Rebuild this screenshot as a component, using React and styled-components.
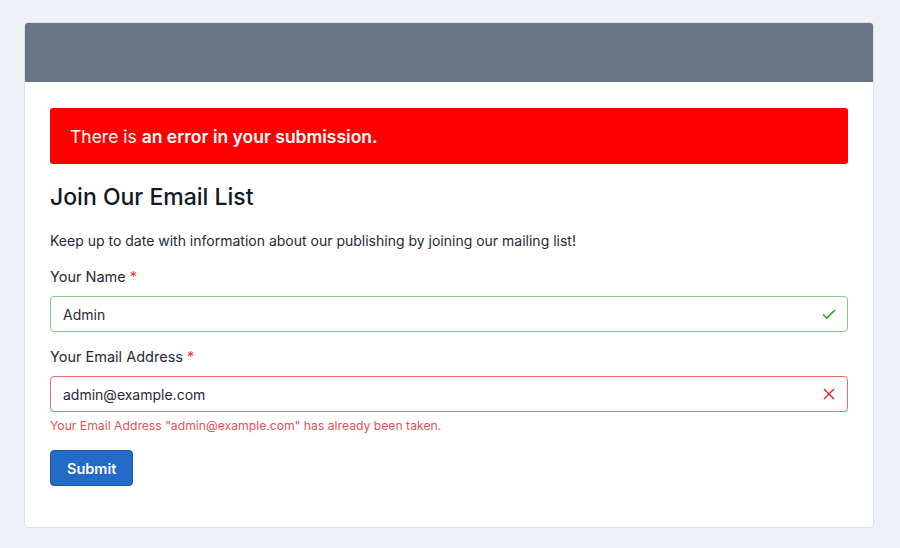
import styled, { createGlobalStyle } from "styled-components";

const Global = createGlobalStyle`
  body {
    margin: 0;
    background: #eef2f6;
    font-family: Inter, "Noto Sans", sans-serif;
    color: #111827;
  }
`;

// page + card
const Page = styled.div`
  padding: 22px 26px 20px 24px;
`;

const Card = styled.div`
  background: #fff;
  border: 1px solid #dde2e8;
  border-radius: 4px;
  overflow: hidden;
`;

const CardHeader = styled.div`
  height: 59px;
  background: #687587;
`;

const CardBody = styled.div`
  padding: 26px 25px 41px;
`;

const Alert = styled.div`
  background: #ff0000;
  color: #fff;
  border-radius: 3px;
  padding: 0 20px;
  height: 56px;
  display: flex;
  align-items: center;
  font-size: 17.5px;
  strong {
    font-weight: 600;
  }
`;

const Title = styled.h2`
  margin: 18px 0 0;
  font-size: 23px;
  line-height: 30px;
  font-weight: 500;
`;

const Lead = styled.p`
  margin: 18px 0 0;
  font-size: 14px;
  line-height: 22px;
  color: #1f2937;
`;

const Field = styled.div`
  margin-top: 14px;
`;

const Label = styled.label`
  display: block;
  font-size: 14.5px;
  line-height: 22px;
  font-weight: 400;
  color: #1f2937;
  margin-bottom: 8px;
  span {
    color: #e53e3e;
  }
`;

const InputWrap = styled.div`
  position: relative;
`;

const Input = styled.input`
  box-sizing: border-box;
  width: 100%;
  height: 36px;
  padding: 0 40px 0 12px;
  font-family: inherit;
  font-size: 14px;
  color: #1f2937;
  border: 1px solid ${(p) => (p.$state === "ok" ? "#86c98a" : "#e46b6b")};
  border-radius: 4px;
  outline: none;
  background: #fff;
`;

const Icon = styled.svg`
  position: absolute;
  right: 11px;
  top: 50%;
  transform: translateY(-50%);
`;

const ErrorText = styled.div`
  margin-top: 5px;
  font-size: 12.2px;
  line-height: 18px;
  color: #e05252;
`;

const Button = styled.button`
  margin-top: 15px;
  height: 36px;
  padding: 0 16px;
  background: #226bc9;
  color: #fff;
  border: 1px solid #1b58a8;
  border-radius: 4px;
  font-family: inherit;
  font-size: 14.5px;
  font-weight: 600;
`;

export default function App() {
  return (
    <>
      <Global />
      <Page>
        <Card>
          <CardHeader />
          <CardBody>
            <Alert>
              <div>
                There is <strong>an error in your submission.</strong>
              </div>
            </Alert>
            <Title>Join Our Email List</Title>
            <Lead>Keep up to date with information about our publishing by joining our mailing list!</Lead>
            <Field>
              <Label>
                Your Name <span>*</span>
              </Label>
              <InputWrap>
                <Input $state="ok" defaultValue="Admin" />
                <Icon width="16" height="16" viewBox="0 0 16 16">
                  <path d="M2 8.5l3.8 3.6L14 4" fill="none" stroke="#22a33a" strokeWidth="1.5" />
                </Icon>
              </InputWrap>
            </Field>
            <Field>
              <Label>
                Your Email Address <span>*</span>
              </Label>
              <InputWrap>
                <Input $state="error" defaultValue="admin@example.com" />
                <Icon width="16" height="16" viewBox="0 0 16 16">
                  <path d="M3 3l10 10M13 3L3 13" fill="none" stroke="#d42020" strokeWidth="1.4" />
                </Icon>
              </InputWrap>
              <ErrorText>Your Email Address "admin@example.com" has already been taken.</ErrorText>
            </Field>
            <Button>Submit</Button>
          </CardBody>
        </Card>
      </Page>
    </>
  );
}
